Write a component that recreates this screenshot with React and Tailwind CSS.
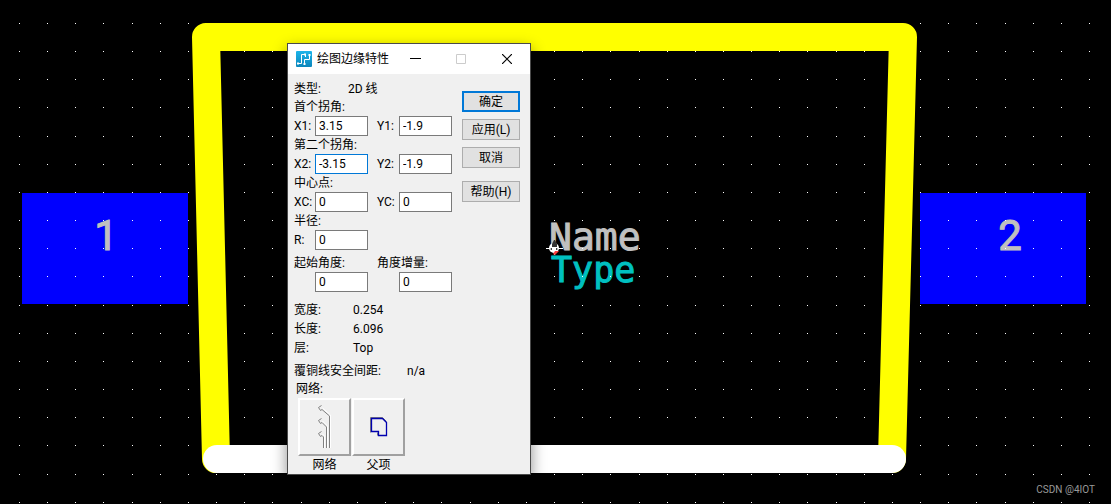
const PITCH = 28.16;
const cols = Array.from({ length: 39 }, (_, i) => Math.round(19 + i * PITCH));
const rows = Array.from({ length: 18 }, (_, i) => Math.round(23 + i * PITCH));

const Board = () => (
  <svg viewBox="0 0 1111 504" className="block h-auto w-full" role="img" aria-label="PCB decal">
    {/* Pads */}
    <g fill="#0000ff">
      <rect x="22" y="193" width="166" height="111" />
      <rect x="920" y="193" width="166" height="111" />
    </g>
    <g className="fill-[#c0c0c0] stroke-[#c0c0c0] font-[Roboto,sans-serif] text-[42px]" textAnchor="middle">
      <text x="106" y="250">1</text>
      <text x="1010" y="250">2</text>
    </g>
    <g className="font-['DejaVu_Sans_Mono',monospace]">
      <text x="549" y="250" className="fill-[#c0c0c0] stroke-[#c0c0c0] text-[38px]">Name</text>
      <text x="551" y="282" className="fill-[#00c0c0] stroke-[#00c0c0] text-[35px]">Type</text>
    </g>
    {/* Grid dots */}
    <g fill="#ffffff" shapeRendering="crispEdges">
      {rows.map((y) => cols.map((x) => <rect key={`${x}-${y}`} x={x} y={y} width="1" height="1" />))}
    </g>
    {/* Outline */}
    <g fill="none" strokeWidth="28" strokeLinecap="round" strokeLinejoin="round">
      <path d="M216 459 L206 37 L903 37 L892 459" stroke="#ffff00" />
      <path d="M217 459 H892" stroke="#ffffff" />
    </g>
    {/* Origin marker */}
    <path d="M546 248.5h17M554.5 240v15" stroke="#ffffff" />
    <circle cx="554" cy="248" r="5" fill="#ffffff" />
    <path d="M552 247v-3l2-4 1 0 2 4v3z" fill="#333333" />
    <path d="M550 249l2-1v2zM558 249l-2-1v2z" fill="#000000" />
    <path d="M553 254l2-3 4 0-4 4z" fill="#ff4040" />
  </svg>
);

const TitleBar = () => (
  <header className="flex h-[30px] items-center bg-white pl-2">
    <svg width="16" height="16" viewBox="0 0 16 16">
      <defs>
        <linearGradient id="appIcon" x1="0" y1="0" x2="0" y2="1">
          <stop offset="0" stopColor="#1cb4ea" />
          <stop offset="1" stopColor="#0c86bb" />
        </linearGradient>
      </defs>
      <rect width="16" height="16" rx="1" fill="url(#appIcon)" />
      <path d="M2 12.5h3.500v-9h3M8.500 13v-4.500h5M9.500 6v-2M13.500 8.500v-5" fill="none" stroke="#ffffff" />
      <path d="M1 11.5h2v2H1zM8 2.500h2v2H8zM7.500 12h2v2h-2zM12.500 3h2v2h-2z" fill="#ffffff" />
    </svg>
    <h1 className="ml-[5px] grow whitespace-nowrap">绘图边缘特性</h1>
    <button type="button" aria-label="最小化" className="flex h-full w-[46px] items-center justify-center">
      <svg width="11" height="11"><path d="M0 4.500h11" stroke="#000000" /></svg>
    </button>
    <button type="button" aria-label="最大化" disabled className="flex h-full w-[46px] items-center justify-center">
      <svg width="10" height="10"><path d="M.5.5h9v9h-9z" fill="none" stroke="#cccccc" /></svg>
    </button>
    <button type="button" aria-label="关闭" className="flex h-full w-[46px] items-center justify-center">
      <svg width="10" height="10"><path d="M0 0l10 10M10 0L0 10" stroke="#000000" strokeWidth="1.2" /></svg>
    </button>
  </header>
);

const Field = ({ label, name, value, active }) => (
  <label className="flex items-center justify-between">
    <span>{label}</span>
    <input
      type="text"
      defaultValue={value}
      aria-label={name}
      className={`h-5 w-[53px] border bg-white px-[3px] outline-none ${active ? "border-[#0078d7]" : "border-[#7a7a7a]"}`}
    />
  </label>
);

const FieldPair = ({ children }) => <div className="grid grid-cols-[74px_75px] gap-x-[9px]">{children}</div>;

const Caption = ({ children }) => <p className="h-[18px] leading-[18px]">{children}</p>;

const PushButton = ({ children, primary }) => (
  <button
    type="button"
    className={`flex h-[21px] w-full items-center justify-center bg-[#e1e1e1] leading-none ${primary ? "border-2 border-[#0078d7]" : "border border-[#adadad]"}`}
  >
    {children}
  </button>
);

const Info = ({ label, value }) => (
  <div className="flex h-[19px] items-center">
    <dt className="w-[59px]">{label}</dt>
    <dd>{value}</dd>
  </div>
);

const ToolButton = ({ label, children }) => (
  <label className="flex w-[53px] flex-col items-center">
    <button
      type="button"
      className="flex h-[58px] w-full items-center justify-center border-2 border-t-white border-r-[#a0a0a0] border-b-[#a0a0a0] border-l-white bg-[#f0f0f0]"
    >
      {children}
    </button>
    <span className="leading-[18px]">{label}</span>
  </label>
);

const NetIcon = () => (
  <svg width="16" height="46" viewBox="0 0 16 46" fill="none">
    <path d="M5.500 4l8 7v33M5.500 17l5 5v22M5.500 30l2 2v12" stroke="#ffffff" />
    <g stroke="#808080">
      <path d="M4.500 1.500l-3 2 2 3 1.500-1L12.500 12v32" />
      <path d="M4.500 14.500l-3 2 2 3 1.500-1L9.500 23v21" />
      <path d="M4.500 27.500l-3 2 2 3 1.500-1L6.500 33v11" />
    </g>
  </svg>
);

const ParentIcon = () => (
  <svg width="20" height="22" viewBox="0 0 20 22" fill="none">
    <path d="M1.500 16.500V1.500h12l4 4M8.500 19.500v-3" stroke="#808080" />
    <path d="M2.500 2.500h11l4 4v13h-8v-4h-7z" stroke="#0000b0" strokeWidth="1.3" />
  </svg>
);

const Dialog = () => (
  <section className="w-[244px] border border-[#4a4a4a] bg-[#f0f0f0] font-[Roboto,'Noto_Sans_CJK_SC',sans-serif] text-[12px] text-black shadow-[0_6px_14px_rgba(0,0,0,0.45)]">
    <TitleBar />
    <div className="flex justify-between pr-[10px] pl-[6px]">
      <form className="pt-[6px]">
        <p className="flex h-[18px] items-center">
          <span className="w-[54px]">类型:</span>2D 线
        </p>
        <Caption>首个拐角:</Caption>
        <FieldPair>
          <Field label="X1:" value="3.15" />
          <Field label="Y1:" value="-1.9" />
        </FieldPair>
        <Caption>第二个拐角:</Caption>
        <FieldPair>
          <Field label="X2:" value="-3.15" active />
          <Field label="Y2:" value="-1.9" />
        </FieldPair>
        <Caption>中心点:</Caption>
        <FieldPair>
          <Field label="XC:" value="0" />
          <Field label="YC:" value="0" />
        </FieldPair>
        <Caption>半径:</Caption>
        <FieldPair>
          <Field label="R:" value="0" />
        </FieldPair>
        <div className="pt-1">
          <FieldPair>
            <Caption>起始角度:</Caption>
            <Caption>角度增量:</Caption>
            <Field name="起始角度" value="0" />
            <Field name="角度增量" value="0" />
          </FieldPair>
        </div>
      </form>
      <div className="flex w-[58px] flex-col gap-[7px] pt-[17px]">
        <PushButton primary>确定</PushButton>
        <PushButton>应用(L)</PushButton>
        <PushButton>取消</PushButton>
        <div className="pt-[6px]">
          <PushButton>帮助(H)</PushButton>
        </div>
      </div>
    </div>
    <dl className="pt-2 pl-[6px]">
      <Info label="宽度:" value="0.254" />
      <Info label="长度:" value="6.096" />
      <Info label="层:" value="Top" />
      <div className="flex h-[23px] items-end leading-[18px]">
        <dt className="w-[113px]">覆铜线安全间距:</dt>
        <dd>n/a</dd>
      </div>
    </dl>
    <p className="pl-2 leading-[18px]">网络:</p>
    <div className="flex gap-px pl-[10px]">
      <ToolButton label="网络">
        <NetIcon />
      </ToolButton>
      <ToolButton label="父项">
        <ParentIcon />
      </ToolButton>
    </div>
  </section>
);

const App = () => (
  <main className="relative min-h-screen overflow-hidden bg-black">
    <Board />
    <div className="absolute top-[43px] left-[287px]">
      <Dialog />
    </div>
    <p className="absolute right-4 bottom-[7px] font-[Roboto,sans-serif] text-[10px] text-[#999999]">CSDN @4IOT</p>
  </main>
);

export default App;
